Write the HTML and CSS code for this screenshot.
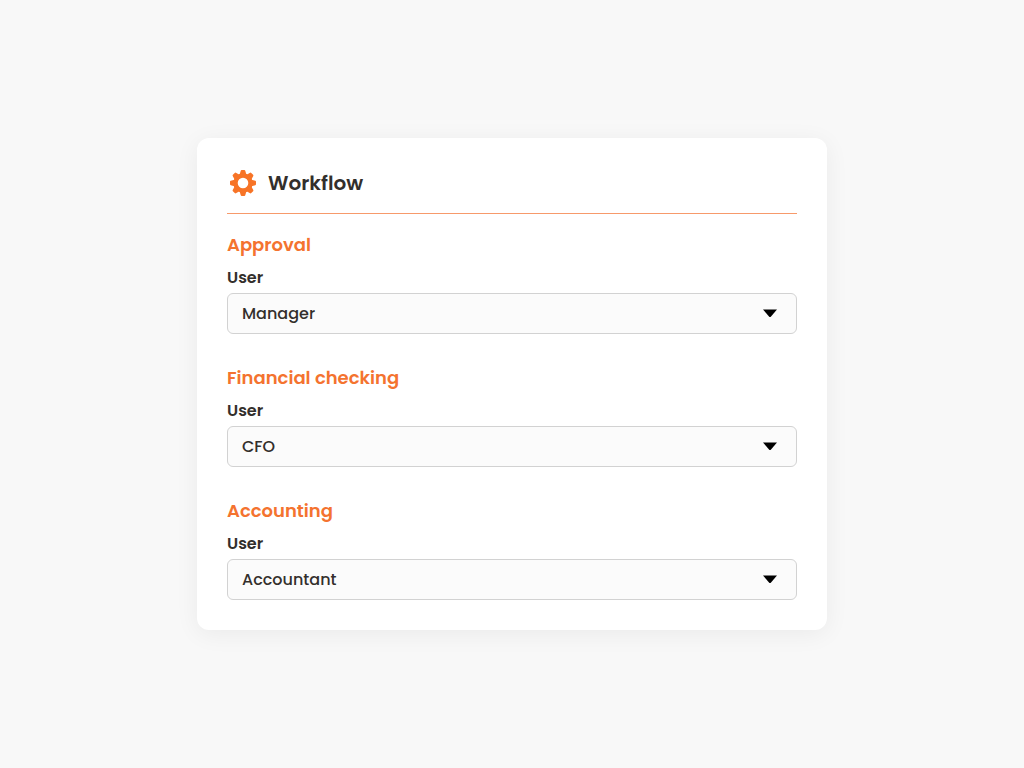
FILE: index.html
```
<!DOCTYPE html>
<html lang="en">
<head>
    <meta charset="UTF-8" />
    <meta name="viewport" content="width=device-width, initial-scale=1.0" />
    <title>Workflow</title>
    <link rel="stylesheet" href="styles.css">
</head>
<body>

<main class="card">
    <header class="card-header">
        <svg class="gear" viewBox="-13 -13 26 26" aria-hidden="true">
            <circle r="7.5" fill="none" stroke="currentColor" stroke-width="4.4" />
            <g fill="currentColor" stroke="currentColor" stroke-width="2" stroke-linejoin="round">
                <path id="tooth" d="M-2.4 -8.2 L-1.3 -12 H1.3 L2.4 -8.2 Z" />
                <use href="#tooth" transform="rotate(45)" />
                <use href="#tooth" transform="rotate(90)" />
                <use href="#tooth" transform="rotate(135)" />
                <use href="#tooth" transform="rotate(180)" />
                <use href="#tooth" transform="rotate(225)" />
                <use href="#tooth" transform="rotate(270)" />
                <use href="#tooth" transform="rotate(315)" />
            </g>
        </svg>
        <h1>Workflow</h1>
    </header>

    <div class="steps">
        <section class="step">
            <h2>Approval</h2>
            <label for="approval-user">User</label>
            <div class="select-box">
                <select id="approval-user">
                    <option>Manager</option>
                </select>
                <svg class="arrow" viewBox="0 0 14 9" aria-hidden="true"><path d="M0 0.4H14L8 7.5Q7 8.5 6 7.5Z" /></svg>
            </div>
        </section>

        <section class="step">
            <h2>Financial checking</h2>
            <label for="financial-user">User</label>
            <div class="select-box">
                <select id="financial-user">
                    <option>CFO</option>
                </select>
                <svg class="arrow" viewBox="0 0 14 9" aria-hidden="true"><path d="M0 0.4H14L8 7.5Q7 8.5 6 7.5Z" /></svg>
            </div>
        </section>

        <section class="step">
            <h2>Accounting</h2>
            <label for="accounting-user">User</label>
            <div class="select-box">
                <select id="accounting-user">
                    <option>Accountant</option>
                </select>
                <svg class="arrow" viewBox="0 0 14 9" aria-hidden="true"><path d="M0 0.4H14L8 7.5Q7 8.5 6 7.5Z" /></svg>
            </div>
        </section>
    </div>
</main>

</body>
</html>
```
FILE: styles.css
```
* { box-sizing: border-box; }
body {
    margin: 0;
    min-height: 100vh;
    display: flex;
    justify-content: center;
    align-items: center;
    background: #f8f8f8;
    color: #332f2c;
    font-family: Poppins, Inter, sans-serif;
}
.card {
    width: 100%;
    max-width: 630px;
    padding: 30px;
    background: #fff;
    border-radius: 12px;
    box-shadow: 0 4px 24px rgba(0,0,0,0.06);
}
.card-header {
    display: flex;
    align-items: center;
    gap: 12px;
    padding: 0 3px 15px;
    border-bottom: 1px solid #f79a6b;
}
.gear {
    width: 26px;
    height: 26px;
    color: #f77427;
}
h1, h2 {
    margin: 0;
    font-weight: 600;
}
h1 {
    font-size: 20px;
    line-height: 30px;
}
.steps {
    display: flex;
    flex-direction: column;
    gap: 30px;
    padding-top: 17px;
}
.step {
    display: flex;
    flex-direction: column;
}
h2 {
    margin-bottom: 7px;
    color: #f4732f;
    font-size: 18px;
    line-height: 28px;
}
label {
    margin-bottom: 3px;
    font-size: 16px;
    font-weight: 600;
    line-height: 24px;
}
/* the arrow shares the grid cell of the select */
.select-box {
    display: grid;
    align-items: center;
}
.select-box select, .arrow { grid-area: 1 / 1; }
select {
    appearance: none;
    width: 100%;
    height: 41px;
    padding: 0 40px 0 14px;
    border: 1px solid #d2d2d2;
    border-radius: 6px;
    background: #fbfbfb;
    color: #332f2c;
    font-family: inherit;
    font-size: 16px;
    font-weight: 500;
    cursor: pointer;
}
.arrow {
    width: 14px;
    height: 9px;
    margin-right: 20px;
    justify-self: end;
    pointer-events: none;
}
```
